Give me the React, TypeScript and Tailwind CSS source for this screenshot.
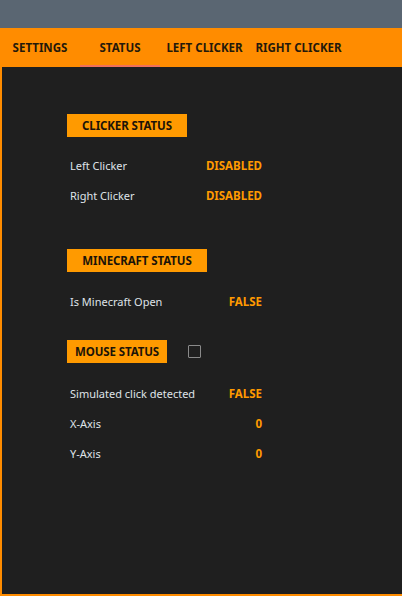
import React from "react";

const font = { fontFamily: '"Noto Sans", "Open Sans", "Liberation Sans", sans-serif' };

function Header({ title, w }: { title: string; w: string }) {
  return (
    <div className={`h-[23px] ${w} bg-[#ff9a00] flex items-center justify-center text-[11.5px] font-bold text-[#1c1408] tracking-[-0.1px]`}>
      {title}
    </div>
  );
}

function Row({ label, value }: { label: string; value: string }) {
  return (
    <div className="h-[30px] w-[195px] flex items-center justify-between pl-[3px]">
      <span className="text-[11px] text-[#dfe3e8]">{label}</span>
      <span className="text-[11.5px] font-bold text-[#ff9a00]">{value}</span>
    </div>
  );
}

export default function App() {
  return (
    <div style={font} className="w-[402px] h-[596px] flex flex-col bg-[#1f1f1f]">
      <div className="h-[28px] bg-[#5a6672]" />
      <div className="h-[39px] bg-[#ff8c00] flex items-stretch text-[11.5px] font-bold text-[#24190b]">
        <div className="w-[80px] flex items-center justify-center">SETTINGS</div>
        <div className="w-[80px] flex items-center justify-center relative">
          STATUS
          <div className="absolute left-0 right-0 bottom-0 h-[2px] bg-[#f2705a]" />
        </div>
        <div className="w-[89px] flex items-center justify-center">LEFT CLICKER</div>
        <div className="w-[99px] flex items-center justify-center">RIGHT CLICKER</div>
      </div>
      <div className="flex-1 border-l-2 border-b-2 border-[#ff8c00] pl-[65px] pt-[47px] flex flex-col">
        <Header title="CLICKER STATUS" w="w-[120px]" />
        <div className="h-[14px]" />
        <Row label="Left Clicker" value="DISABLED" />
        <Row label="Right Clicker" value="DISABLED" />
        <div className="h-[38px]" />
        <Header title="MINECRAFT STATUS" w="w-[140px]" />
        <div className="h-[15px]" />
        <Row label="Is Minecraft Open" value="FALSE" />
        <div className="h-[23px]" />
        <div className="flex items-center">
          <Header title="MOUSE STATUS" w="w-[100px]" />
          <div className="ml-[21px] w-[13px] h-[13px] border-[1.5px] border-[#8a8a8a] rounded-[1px]" />
        </div>
        <div className="h-[16px]" />
        <Row label="Simulated click detected" value="FALSE" />
        <Row label="X-Axis" value="0" />
        <Row label="Y-Axis" value="0" />
      </div>
    </div>
  );
}
